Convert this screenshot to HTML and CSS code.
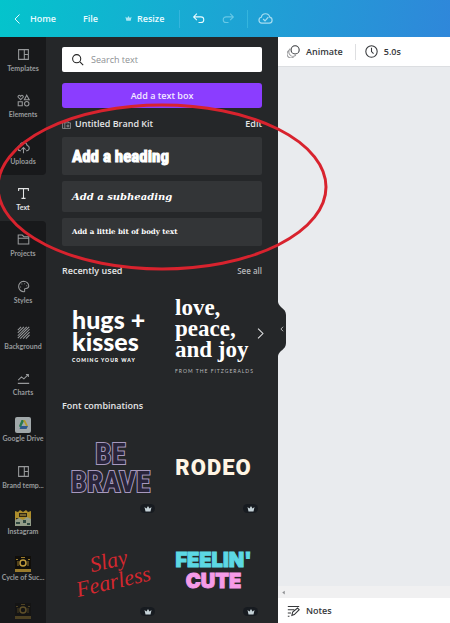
FILE: index.html
```html
<!DOCTYPE html>
<html lang="en">
<head>
<meta charset="utf-8">
<meta name="viewport" content="width=device-width, initial-scale=1">
<title>Design editor</title>
<link rel="stylesheet" href="styles.css">
</head>
<body>
<svg class="defs" aria-hidden="true">
  <symbol id="layout" viewBox="0 0 16 16"><path d="M2 2h12v12H2zM9 2v12M9 8h5"/></symbol>
  <symbol id="crown" viewBox="0 0 16 16"><path d="M1 4l4 3 3-5 3 5 4-3-2 9H3z"/></symbol>
  <symbol id="camera" viewBox="0 0 16 16"><path fill="#0f0d08" d="M0 0h16v16H0z"/><path fill="#b08b30" d="M1 3h2v1H1zM6 1h4v1H6zM13 3h2v1h-2zM0 13h16v3H0z"/><path fill="#5d4a1c" d="M2 5h2v5H2zM12 5h2v5h-2z"/><circle cx="8" cy="7" r="3" fill="none" stroke="#e0b545" stroke-width="1.500"/></symbol>
</svg>
<div class="app">
  <header class="topbar">
    <a class="home" href="#"><svg class="icon" viewBox="0 0 16 16"><path d="M10 2L4 8l6 6"/></svg>Home</a>
    <button class="file">File</button>
    <button class="resize"><svg class="mini-crown" viewBox="0 0 16 16"><use href="#crown"/></svg>Resize</button>
    <span class="divider"></span>
    <button class="undo" aria-label="Undo"><svg class="icon" viewBox="0 0 16 16"><path d="M6 2L2 6l4 4M2 6h9a3.500 3.500 0 0 1 0 7H8"/></svg></button>
    <button class="redo" aria-label="Redo"><svg class="icon" viewBox="0 0 16 16"><path d="M10 2l4 4-4 4M14 6H5a3.500 3.500 0 0 0 0 7h3"/></svg></button>
    <span class="divider"></span>
    <button class="saved" aria-label="All changes saved"><svg class="icon" viewBox="0 0 16 16"><path d="M4 13a3.200 3.200 0 0 1-.5-6.300 4.600 4.600 0 0 1 9-.2A3.300 3.300 0 0 1 12 13zM5.500 8.500l2 2 3.500-4"/></svg></button>
  </header>
  <div class="workspace">
    <nav class="rail" aria-label="Editor sections">
      <div class="rail-list">
        <a href="#"><svg class="icon" viewBox="0 0 16 16"><use href="#layout"/></svg>Templates</a>
        <a href="#"><svg class="icon" viewBox="0 0 16 16"><path d="M4.500 7L1.500 4c-1-2 2-3.500 3-1.300 1-2.200 4-.7 3 1.300zM12 1.500L15 7H9zM1.500 9.500h5v5h-5z"/><circle cx="12" cy="12" r="2.700"/></svg>Elements</a>
        <a href="#" class="above"><svg class="icon" viewBox="0 0 16 16"><path d="M5 12H4a3.200 3.200 0 0 1-.5-6.300 4.600 4.600 0 0 1 9-.2A3.300 3.300 0 0 1 12 12h-1M8 15V8M5.500 10.500L8 8l2.500 2.500"/></svg>Uploads</a>
        <a href="#" class="active" aria-current="page"><svg class="icon" viewBox="0 0 16 16"><path d="M2 5V2h12v3M8 2v12M5.500 14h5"/></svg>Text</a>
        <a href="#" class="below"><svg class="icon" viewBox="0 0 16 16"><path d="M1.500 13.500v-11h5l2 2h6v9zM1.500 6.500h13"/></svg>Projects</a>
        <a href="#"><svg class="icon" viewBox="0 0 16 16"><path d="M8 1.500a6.500 6.500 0 1 0 1 13c1.500-.5-.5-2.500.5-3.500s5 .5 5-3.500c0-3.500-3-6-6.500-6z"/><path d="M4 8.500h1M5.500 5h1M9 4.500h1M11.500 7h1"/></svg>Styles</a>
        <a href="#"><svg class="icon" viewBox="0 0 16 16"><path d="M1 5l4-4M1 8.500L8.500 1M1 12L12 1M1 15L15 1M4 15.500L15.500 4M7.500 15.500l8-8M11 15.500l4.500-4.500"/></svg>Background</a>
        <a href="#"><svg class="icon" viewBox="0 0 16 16"><path d="M1.500 10l4-4 3 2.500L14 3M11 3h3v3M1 14h14"/></svg>Charts</a>
        <a href="#"><svg class="logo" viewBox="0 0 16 16"><rect width="16" height="16" rx="2" fill="#b9c2c4"/><path fill="#2b8a57" d="M6.500 3h3L5.500 11 4 9z"/><path fill="#cfb12f" d="M8 3h2l3 6h-2z"/><path fill="#3465a0" d="M6 9h7l-1.500 3H4.500z"/></svg>Google Drive</a>
        <a href="#"><svg class="icon" viewBox="0 0 16 16"><use href="#layout"/></svg>Brand temp...</a>
        <a href="#"><svg class="logo" viewBox="0 0 16 16"><path fill="#c8a22f" d="M0 1l3 1 2-2 3 2 3-2 2 2 3-1v9H0z"/><path fill="#302814" d="M4 3h8v4H4zM1 8h3v2H1z"/><path fill="#a9b49b" d="M0 10l4-2 4 2 4-3 4 2v7H0z"/><path fill="#345047" d="M1 12h4v2H1zM8 10h3v3H8zM12 13h3v2h-3z"/><path stroke="#e3bd50" d="M5 5h6"/></svg>Instagram</a>
        <a href="#"><svg class="logo" viewBox="0 0 16 16"><use href="#camera"/></svg>Cycle of Suc...</a>
        <a href="#" class="faded" aria-label="More"><svg class="logo" viewBox="0 0 16 16"><use href="#camera"/></svg></a>
      </div>
    </nav>
    <aside class="panel">
      <label class="search"><svg class="icon" viewBox="0 0 16 16"><circle cx="7" cy="7" r="5"/><path d="M11 11l4 4"/></svg><input type="search" placeholder="Search text" aria-label="Search text"></label>
      <button class="add-box">Add a text box</button>
      <div class="row kit"><h2><svg class="icon" viewBox="0 0 16 16"><path d="M1 5h14v10H1zM1 5l9-3 2 3M5 5v10M9 9h3v3H9z"/></svg>Untitled Brand Kit</h2><a href="#">Edit</a></div>
      <div class="presets">
        <button class="heading">Add a heading</button>
        <button class="subheading">Add a subheading</button>
        <button class="body-text">Add a little bit of body text</button>
      </div>
      <div class="row recent"><h2>Recently used</h2><a href="#" class="muted">See all</a></div>
      <div class="cards recent-cards">
        <article class="card hugs"><p>hugs +<br>kisses</p><small>COMING YOUR WAY</small></article>
        <article class="card love"><p>love,<br>peace,<br>and joy</p><small>FROM THE FITZGERALDS</small></article>
        <button class="next" aria-label="Next"><svg class="icon" viewBox="0 0 16 16"><path d="M5 2l6 6-6 6"/></svg></button>
      </div>
      <div class="row combos"><h2>Font combinations</h2></div>
      <div class="cards">
        <article class="card brave"><p>BE<br>BRAVE</p><span class="pro"><svg viewBox="0 0 16 16"><use href="#crown"/></svg></span></article>
        <article class="card rodeo"><p>RODEO</p><span class="pro"><svg viewBox="0 0 16 16"><use href="#crown"/></svg></span></article>
        <article class="card slay"><p>Slay<br>Fearless</p><span class="pro"><svg viewBox="0 0 16 16"><use href="#crown"/></svg></span></article>
        <article class="card cute"><p>FEELIN'<br><b>CUTE</b></p><span class="pro"><svg viewBox="0 0 16 16"><use href="#crown"/></svg></span></article>
      </div>
      <button class="collapse" aria-label="Collapse panel"><svg class="tab" viewBox="0 0 8 54" preserveAspectRatio="none"><path d="M0 0C1 6 8 6 8 13v28c0 7-7 7-8 13z"/></svg><svg class="icon" viewBox="0 0 16 16"><path d="M11 2L5 8l6 6"/></svg></button>
    </aside>
    <main class="stage">
      <div class="toolbar">
        <button><svg class="icon" viewBox="0 0 16 16"><circle cx="10" cy="6" r="5"/><path class="soft" d="M4 4.500a5 5 0 1 0 7 8M2 7a5 5 0 0 0 6 8"/></svg>Animate</button>
        <span class="divider"></span>
        <button><svg class="icon" viewBox="0 0 16 16"><circle cx="8" cy="8" r="7"/><path d="M8 3.500V8l2.500 2.500"/></svg>5.0s</button>
      </div>
      <div class="canvas"></div>
      <div class="scrollbar"><svg viewBox="0 0 8 8"><path d="M6 1v6L2 4z"/></svg></div>
      <footer><button><svg class="icon" viewBox="0 0 16 16"><path d="M1 3h14M1 7h8M1 11h4M1 15h2M6 14l1-4 6-5 2 2-6 6z"/></svg>Notes</button></footer>
    </main>
  </div>
  <svg class="marker" viewBox="0 0 332 168" aria-hidden="true"><ellipse cx="166" cy="84" rx="164" ry="82"/></svg>
</div>
</body>
</html>
```
FILE: styles.css
```css
* { box-sizing: border-box; }
body { margin: 0; font: 600 9px/12px "Open Sans", "Noto Sans", sans-serif; color: #e4e5e6; }
h2, p { margin: 0; font: inherit; }
a { color: inherit; text-decoration: none; }
button { padding: 0; border: 0; background: none; color: inherit; font: inherit; display: flex; align-items: center; }
.defs { position: absolute; width: 0; height: 0; }
.icon { width: 13px; height: 13px; flex: none; fill: none; stroke: currentColor; stroke-width: 1.3; }
.app { position: relative; height: 100vh; display: flex; flex-direction: column; overflow: hidden; }

.topbar { flex: none; height: 37px; display: flex; align-items: center; padding-left: 12px; background: linear-gradient(100deg, #04c4cc, #1ca5d4 50%, #2f87da); color: #e9fbff; }
.home { display: flex; align-items: center; gap: 6px; }
.home .icon { width: 12px; height: 12px; }
.file { margin-left: 27px; }
.resize { margin-left: 27px; gap: 5px; }
.mini-crown { width: 7px; height: 7px; fill: #a9e7f4; }
.topbar .divider { width: 1px; height: 18px; margin: 0 12px 0 15px; background: #35b5dd; }
.redo { margin-left: 17px; color: #68c8e6; }
.redo + .divider { margin: 0 10px 0 12px; }
.saved { color: #a5dcf0; }
.saved .icon { width: 15px; height: 15px; }

.workspace { flex: 1; min-height: 0; display: grid; grid-template-columns: 46px 232px 1fr; }
.rail { background: #252729; overflow: hidden; min-height: 0; }
.rail-list { height: calc(100% + 16px); margin-top: -1px; display: grid; grid-template-rows: repeat(13, 1fr); }
.rail a { min-height: 0; padding-top: 12px; display: flex; flex-direction: column; align-items: center; gap: 2px; background: #18191b; color: #97999b; font: 700 7px/10px Lato, sans-serif; white-space: nowrap; }
.rail .active { background: #252729; color: #e4e5e6; }
.rail .above { border-bottom-right-radius: 4px; }
.rail .below { border-top-right-radius: 4px; }
.logo { width: 16px; height: 16px; margin: -1px 0 -2px; flex: none; opacity: .85; }
.faded .logo { opacity: .35; }

.panel { position: relative; min-width: 0; padding: 10px 16px 0; background: #252729; }
.search { height: 25px; display: flex; align-items: center; gap: 7px; padding: 0 9px; border-radius: 2px; background: #fff; color: #222; }
.search input { min-width: 0; flex: 1; padding: 0; border: 0; outline: 0; background: none; font: 400 9px/12px "Open Sans", sans-serif; }
.search input::placeholder { color: #8d9094; }
.add-box { width: 100%; height: 25px; margin-top: 11px; justify-content: center; border-radius: 3px; background: #8b3dff; color: #f3eaff; }
.row { height: 12px; display: flex; align-items: center; justify-content: space-between; }
.row h2 { display: flex; align-items: center; gap: 4px; }
.kit { margin-top: 10px; }
.kit .icon { width: 9px; height: 9px; color: #a0a1a3; }
.muted { color: #b5b6b8; font-size: 8px; }
.presets { margin-top: 7px; display: grid; gap: 6px; }
.presets button { padding-left: 10px; border-radius: 2px; background: #333537; color: #fff; white-space: nowrap; }
.presets .heading { height: 38px; font: 700 17px/22px "Liberation Sans Narrow", "Roboto Condensed", Roboto, sans-serif; -webkit-text-stroke: 1px #fff; }
.presets .subheading { height: 31px; font: italic 700 10px/14px "DejaVu Serif", serif; }
.presets .body-text { height: 28px; font: 700 7px/10px "DejaVu Serif", serif; }
.recent { margin-top: 19px; }
.combos { margin-top: 15px; }
.cards { position: relative; display: grid; grid-template-columns: 1fr 1fr; gap: 7px 6px; margin-top: 8px; }
.card { position: relative; height: 96px; display: flex; flex-direction: column; justify-content: center; align-items: center; white-space: nowrap; color: #fff; }
.recent-cards .card { align-items: flex-start; padding-left: 10px; height: 100px; }
.hugs p { font: 900 25px/22px Lato, sans-serif; }
.hugs small { margin-top: 5px; font: 900 5px/6px Lato, sans-serif; letter-spacing: 1px; }
.love p { font: 700 23px/21px "Liberation Serif", serif; }
.love small { margin-top: 8px; font: 400 5px/6px Lato, sans-serif; letter-spacing: 1px; color: #b9babc; }
.next { position: absolute; right: -5px; top: 42px; }
.brave p { font: 700 29px/28px "Liberation Sans Narrow", "Roboto Condensed", sans-serif; text-align: center; color: #29243a; -webkit-text-stroke: 2px #a799bd; paint-order: stroke fill; }
.rodeo p { font: 900 22px/24px Roboto, sans-serif; letter-spacing: 1px; color: #fff5e4; }
.slay p { font: italic 400 22px/21px "Liberation Serif", serif; text-align: center; color: #d4272f; rotate: -13deg; }
.cute p { font: 900 20px/21px Inter, sans-serif; text-align: center; color: #5cd8e4; -webkit-text-stroke: 1px #5cd8e4; }
.cute b { font-weight: 900; color: #f59be8; -webkit-text-stroke: 1px #f59be8; }
.pro { position: absolute; right: 4px; bottom: 3px; width: 15px; height: 9px; display: grid; place-items: center; border-radius: 5px; background: #171b20; }
.pro svg { width: 8px; height: 8px; fill: #c5d2d7; }
.collapse { position: absolute; z-index: 1; left: 100%; top: 265px; width: 8px; height: 54px; justify-content: center; }
.tab { position: absolute; inset: 0; width: 100%; height: 100%; fill: #252729; }
.collapse .icon { position: relative; width: 6px; height: 6px; stroke-width: 2; }

.stage { min-width: 0; display: flex; flex-direction: column; background: #e9ebee; color: #36383b; }
.toolbar { height: 30px; display: flex; align-items: center; padding-left: 9px; background: #fff; border-bottom: 1px solid #dcdee1; }
.toolbar button, footer button { gap: 6px; }
.toolbar .divider { width: 1px; height: 16px; margin: 0 9px 0 12px; background: #dedfe1; }
.soft { opacity: .5; }
.canvas { flex: 1; }
.scrollbar { height: 12px; display: flex; align-items: center; padding-left: 3px; background: #f0f0f1; }
.scrollbar svg { width: 5px; height: 5px; fill: #8c8e91; }
footer { height: 25px; display: flex; align-items: center; padding-left: 9px; background: #fff; }

.marker { position: absolute; z-index: 2; left: -4px; top: 103px; width: 332px; height: 168px; fill: none; stroke: #d8232e; stroke-width: 3; pointer-events: none; }
```
